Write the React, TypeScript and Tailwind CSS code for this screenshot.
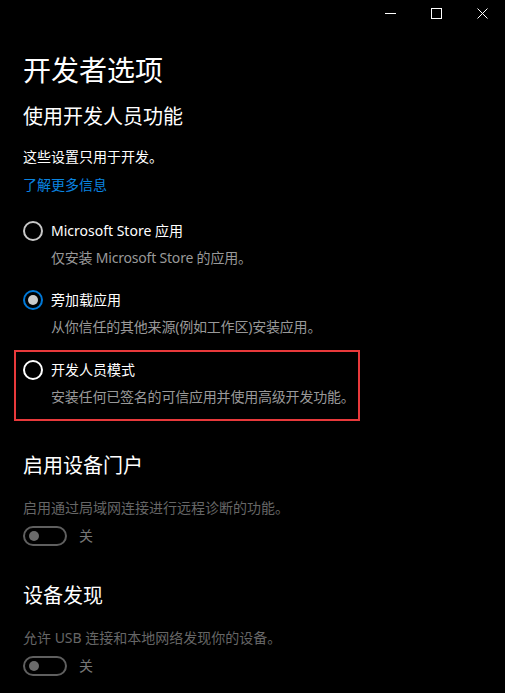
import { ReactNode } from "react";

const font = {
	fontFamily: '"Segoe UI", "Noto Sans", "Noto Sans CJK SC", sans-serif',
};

function TitleBar() {
	return (
		<div className="h-[32px] flex justify-end">
			<div className="w-[46px] h-[26px] flex items-center justify-center">
				<svg width="11" height="11" viewBox="0 0 11 11">
					<path d="M0 5.5 H11" stroke="#fff" strokeWidth="1" />
				</svg>
			</div>
			<div className="w-[46px] h-[26px] flex items-center justify-center">
				<svg width="11" height="11" viewBox="0 0 11 11">
					<rect x="0.5" y="0.5" width="10" height="10" fill="none" stroke="#fff" strokeWidth="1" />
				</svg>
			</div>
			<div className="w-[46px] h-[26px] flex items-center justify-center">
				<svg width="11" height="11" viewBox="0 0 11 11">
					<path d="M0.5 0.5 L10.5 10.5 M10.5 0.5 L0.5 10.5" stroke="#fff" strokeWidth="1" />
				</svg>
			</div>
		</div>
	);
}

function Radio({
	label,
	desc,
	checked,
	ring = "border-[#c8c8c8]",
}: {
	label: string;
	desc: string;
	checked?: boolean;
	ring?: string;
}) {
	return (
		<div className="flex flex-col gap-[7px]">
			<div className="flex items-center h-[20px] gap-[8px]">
				{checked ? (
					<span className="w-[20px] h-[20px] rounded-full border-2 border-[#0078d7] flex items-center justify-center">
						<span className="w-[10px] h-[10px] rounded-full bg-[#cccccc]" />
					</span>
				) : (
					<span className={`w-[20px] h-[20px] rounded-full border-2 ${ring}`} />
				)}
				<span className="text-[14px] leading-[20px] text-white whitespace-nowrap">{label}</span>
			</div>
			<p className="pl-[28px] text-[14px] leading-[20px] text-[#999999] whitespace-nowrap tracking-[-0.2px]">
				{desc}
			</p>
		</div>
	);
}

function Toggle() {
	return (
		<div className="flex items-center gap-[12px] h-[20px]">
			<span className="w-[44px] h-[20px] rounded-full border-2 border-[#5f5f5f] flex items-center pl-[4px]">
				<span className="w-[10px] h-[10px] rounded-full bg-[#6b6b6b]" />
			</span>
			<span className="text-[14px] leading-[20px] text-[#767676]">关</span>
		</div>
	);
}

function Section({ title, desc, children }: { title: string; desc: string; children: ReactNode }) {
	return (
		<div className="pl-[9px] flex flex-col">
			<h2 className="text-[20px] leading-[28px] text-white">{title}</h2>
			<p className="mt-[18px] text-[14px] leading-[20px] text-[#666666] whitespace-nowrap">{desc}</p>
			<div className="mt-[8px]">{children}</div>
		</div>
	);
}

export default function App() {
	return (
		<div className="w-[505px] h-[693px] bg-black overflow-hidden" style={font}>
			<TitleBar />
			<div className="px-[14px] flex flex-col">
				<div className="pl-[9px] flex flex-col">
					<h1 className="mt-[18px] text-[28px] leading-[40px] text-white">开发者选项</h1>
					<h2 className="mt-[13px] text-[20px] leading-[28px] text-white">使用开发人员功能</h2>
					<p className="mt-[16px] text-[14px] leading-[20px] text-white">这些设置只用于开发。</p>
					<a className="mt-[8px] text-[14px] leading-[20px] text-[#0a84e0]">了解更多信息</a>
					<div className="mt-[26px] flex flex-col gap-[22px]">
						<Radio label="Microsoft Store 应用" desc="仅安装 Microsoft Store 的应用。" />
						<Radio label="旁加载应用" desc="从你信任的其他来源(例如工作区)安装应用。" checked />
					</div>
				</div>
				<div className="mt-[13px] w-[346px] border-2 border-[#e8393b] pl-[7px] pt-[8px] pb-[12px]">
					<Radio
						label="开发人员模式"
						desc="安装任何已签名的可信应用并使用高级开发功能。"
						ring="border-white"
					/>
				</div>
				<div className="mt-[31px]">
					<Section title="启用设备门户" desc="启用通过局域网连接进行远程诊断的功能。">
						<Toggle />
					</Section>
				</div>
				<div className="mt-[36px]">
					<Section title="设备发现" desc="允许 USB 连接和本地网络发现你的设备。">
						<Toggle />
					</Section>
				</div>
			</div>
		</div>
	);
}
